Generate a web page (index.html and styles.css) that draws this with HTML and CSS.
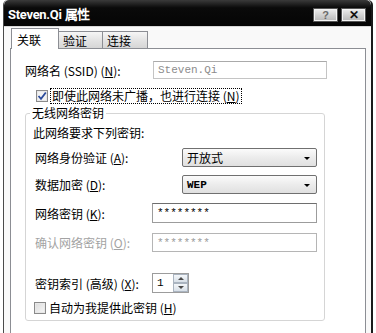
FILE: index.html
```html
<!DOCTYPE html>
<html lang="zh-CN">
<head>
    <meta charset="UTF-8">
    <title>Steven.Qi 属性</title>
    <link rel="stylesheet" href="styles.css">
</head>
<body>
    <div class="window">
        <div class="titlebar">
            <span class="title">Steven.Qi 属性</span>
            <div class="caption-buttons">
                <span class="cap-btn help">?</span>
                <span class="cap-btn close">✕</span>
            </div>
        </div>
        <div class="client">
            <div class="tabs">
                <span class="tab active">关联</span>
                <span class="tab t2">验证</span>
                <span class="tab t3">连接</span>
            </div>
            <div class="panel">
                <div class="row ssid-row">
                    <span class="lbl ssid-lbl">网络名 (SSID) (<u>N</u>):</span>
                    <span class="field ssid-field">Steven.Qi</span>
                </div>
                <div class="row check-row">
                    <span class="checkbox checked">
                        <svg width="10" height="10" viewBox="0 0 10 10"><path d="M1.5 5 L4 7.8 L8.8 1.5" fill="none" stroke="#2b4b9b" stroke-width="1.8"/></svg>
                    </span>
                    <span class="focus">即使此网络未广播，也进行连接 (<u>N</u>)</span>
                </div>
                <fieldset class="group">
                    <legend>无线网络密钥</legend>
                    <div class="intro">此网络要求下列密钥:</div>
                    <div class="row sel-row">
                        <span class="lbl wide">网络身份验证 (<u>A</u>):</span>
                        <span class="select">开放式<i class="arrow"></i></span>
                    </div>
                    <div class="row sel-row">
                        <span class="lbl wide">数据加密 (<u>D</u>):</span>
                        <span class="select mono">WEP<i class="arrow"></i></span>
                    </div>
                    <div class="row key-row">
                        <span class="lbl">网络密钥 (<u>K</u>):</span>
                        <span class="field key-field">********</span>
                    </div>
                    <div class="row key-row disabled">
                        <span class="lbl">确认网络密钥 (<u>O</u>):</span>
                        <span class="field key-field">********</span>
                    </div>
                    <div class="row index-row">
                        <span class="lbl">密钥索引 (高级) (<u>X</u>):</span>
                        <span class="spin">
                            <span class="spin-val">1</span>
                            <span class="spin-btns">
                                <span class="spin-btn"><i class="up"></i></span>
                                <span class="spin-btn"><i class="down"></i></span>
                            </span>
                        </span>
                    </div>
                    <div class="row auto-row">
                        <span class="checkbox"></span>
                        <span>自动为我提供此密钥 (<u>H</u>)</span>
                    </div>
                </fieldset>
            </div>
        </div>
    </div>
</body>
</html>
```

FILE: styles.css
```css
body {
    margin: 0;
    width: 376px;
    height: 333px;
    overflow: hidden;
    background: #ffffff;
    font-family: "Noto Sans CJK SC", "Liberation Sans", sans-serif;
    font-size: 12px;
    color: #000;
}
.window {
    margin-left: 3px;
    width: 367px;
    height: 333px;
    border-left: 1px solid #4a4a4a;
    border-right: 2px solid #1a1a1a;
    border-radius: 5px 5px 0 0;
    background: #f4f4f4;
    overflow: hidden;
}
.titlebar {
    height: 26px;
    background: linear-gradient(#3a3a3a, #0a0a0a 30%, #050505);
    border-radius: 5px 5px 0 0;
    display: flex;
    align-items: center;
    justify-content: space-between;
}
.title {
    color: #fff;
    font-family: Roboto, "Liberation Sans", sans-serif;
    font-weight: 700;
    font-size: 13px;
    letter-spacing: -0.3px;
    padding-left: 4px;
}
.caption-buttons {
    display: flex;
    gap: 3px;
    padding-right: 5px;
    align-self: flex-start;
    margin-top: 8px;
}
.cap-btn {
    width: 23px;
    height: 12px;
    border: 1px solid #555;
    box-shadow: inset 0 0 0 1px #f4f4f4;
    background: linear-gradient(#eeeeee, #cfcfcf 55%, #b8b8b8);
    display: flex;
    align-items: center;
    justify-content: center;
    font-family: "Liberation Sans", sans-serif;
    font-size: 11px;
    line-height: 1;
}
.cap-btn.help {
    color: #6a6a6a;
    font-weight: 700;
}
.cap-btn.close {
    color: #111;
    font-weight: 700;
    font-size: 12px;
}
.client {
    background: #f9f9f9;
    height: 307px;
    border-top: 1px solid #d8d8d8;
    box-sizing: border-box;
}
.tabs {
    display: flex;
    align-items: flex-end;
    height: 21px;
    padding-left: 7px;
}
.tab {
    height: 16px;
    width: 39px;
    border: 1px solid #8c8e94;
    border-bottom: none;
    border-left: none;
    background: linear-gradient(#f6f6f6, #e4e4e4 50%, #d6d6d6);
    display: flex;
    align-items: center;
    padding-left: 4px;
    box-sizing: content-box;
}
.tab.t3 {
    width: 40px;
}
.tab.active {
    height: 20px;
    width: 41px;
    border-left: 1px solid #8c8e94;
    background: #fff;
    margin-bottom: -1px;
    padding-left: 5px;
    position: relative;
    z-index: 1;
    align-items: flex-start;
    line-height: 22px;
}
.panel {
    margin-left: 6px;
    width: 354px;
    height: 290px;
    border: 1px solid #8c8e94;
    border-bottom: none;
    background: #fff;
}
.row {
    display: flex;
    align-items: center;
}
.lbl {
    flex: none;
}
.ssid-row {
    margin-top: 12px;
    padding-left: 14px;
}
.ssid-lbl {
    width: 128px;
}
.field {
    display: flex;
    align-items: center;
    box-sizing: border-box;
    background: #fff;
    font-family: "Liberation Mono", monospace;
    font-size: 11px;
    padding-left: 4px;
}
.ssid-field {
    width: 174px;
    height: 18px;
    border: 1px solid #c4c4c4;
    border-top-color: #aaaaaa;
    color: #8c8c8c;
}
.check-row {
    margin-top: 10px;
    padding-left: 25px;
}
.checkbox {
    width: 10px;
    height: 10px;
    border: 1px solid #8a8a8a;
    background: linear-gradient(135deg, #dcdcdc, #f6f6f6);
    box-shadow: inset 0 0 0 1px #e8e8e8;
    display: flex;
    align-items: center;
    justify-content: center;
    margin-right: 3px;
}
.checkbox.checked {
    background: #f2f2f2;
}
.focus {
    outline: 1px dotted #000;
    line-height: 14px;
    padding: 0 1px;
}
.group {
    margin: 3px 0 0 14px;
    width: 300px;
    box-sizing: border-box;
    height: 215px;
    border: 1px solid #d5d5d5;
    border-radius: 3px;
    padding: 0 0 0 8px;
}
.group legend {
    padding: 0 2px;
    margin-left: -4px;
    line-height: 14px;
}
.intro {
    margin-top: 6px;
    line-height: 14px;
    margin-left: -1px;
}
.sel-row {
    margin-top: 8px;
    margin-left: 1px;
}
.lbl.wide {
    width: 147px;
}
.select {
    width: 135px;
    height: 19px;
    box-sizing: border-box;
    border: 1px solid #707070;
    border-radius: 2px;
    background: linear-gradient(#fbfbfb, #ececec 50%, #e0e0e0);
    display: flex;
    align-items: center;
    padding-left: 4px;
    position: relative;
}
.select.mono {
    font-family: "Liberation Mono", monospace;
    font-size: 11px;
    font-weight: 700;
}
.arrow {
    position: absolute;
    right: 6px;
    top: 8px;
    border-left: 3px solid transparent;
    border-right: 3px solid transparent;
    border-top: 3px solid #000;
}
.key-row {
    margin-top: 9px;
    margin-left: 1px;
}
.key-row .lbl {
    width: 117px;
}
.key-field {
    width: 165px;
    height: 20px;
    border: 1px solid #9c9c9c;
    border-top-color: #6e6e6e;
    color: #000;
}
.key-row.disabled {
    margin-top: 10px;
    color: #a3a3a3;
}
.key-row.disabled .key-field {
    height: 19px;
    border-color: #b5b5b5;
    color: #9a9a9a;
}
.index-row {
    margin-top: 21px;
    margin-left: 1px;
}
.index-row .lbl {
    width: 117px;
}
.spin {
    width: 37px;
    height: 20px;
    box-sizing: border-box;
    border: 1px solid #9c9c9c;
    display: flex;
    background: #fff;
}
.spin-val {
    flex: 1;
    padding-left: 4px;
    font-family: "Liberation Mono", monospace;
    font-size: 11px;
    line-height: 18px;
}
.spin-btns {
    width: 15px;
    display: flex;
    flex-direction: column;
}
.spin-btn {
    flex: 1;
    border: 1px solid #aab4c0;
    background: linear-gradient(#f4f7fa, #d8e0e8);
    display: flex;
    align-items: center;
    justify-content: center;
}
.up {
    border-left: 3px solid transparent;
    border-right: 3px solid transparent;
    border-bottom: 3px solid #4a4a4a;
}
.down {
    border-left: 3px solid transparent;
    border-right: 3px solid transparent;
    border-top: 3px solid #4a4a4a;
}
.auto-row {
    margin-top: 6px;
}
```
